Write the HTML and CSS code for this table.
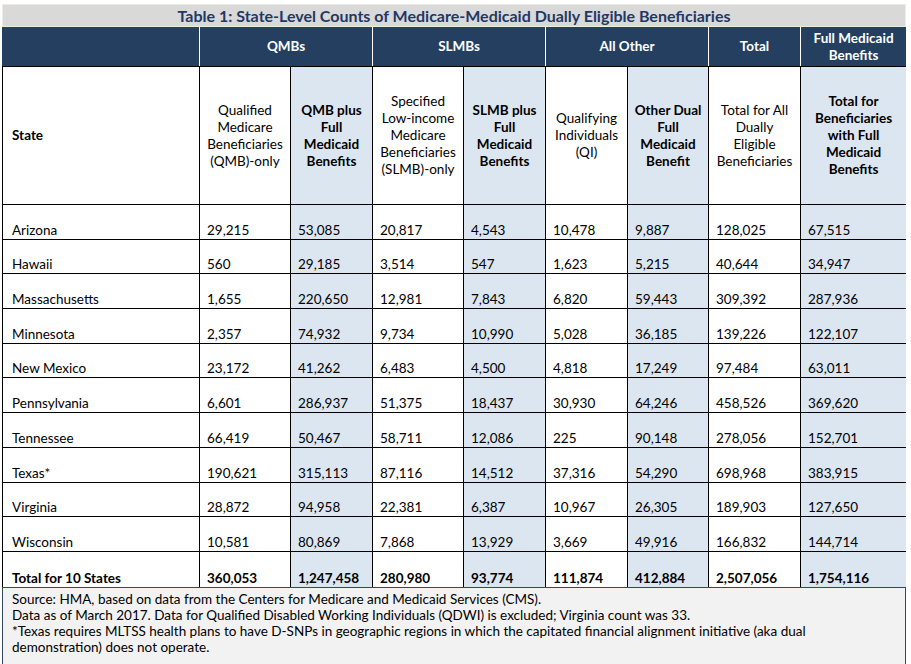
FILE: index.html
```html
<!DOCTYPE html>
<html lang="en">
<head>
<meta charset="utf-8">
<title>Table 1</title>
<link rel="stylesheet" href="styles.css">
</head>
<body>
<div class="wrap">
  <div class="title">Table 1: State-Level Counts of Medicare-Medicaid Dually Eligible Beneficiaries</div>
  <table class="data">
    <colgroup>
      <col class="c-state"><col class="c1"><col class="c2"><col class="c3"><col class="c4"><col class="c5"><col class="c6"><col class="c7"><col class="c8">
    </colgroup>
    <thead>
      <tr class="group">
        <th></th>
        <th colspan="2">QMBs</th>
        <th colspan="2">SLMBs</th>
        <th colspan="2">All Other</th>
        <th>Total</th>
        <th class="last">Full Medicaid<br>Benefits</th>
      </tr>
      <tr class="sub">
        <th class="state">State</th>
        <th>Qualified<br>Medicare<br>Beneficiaries<br>(QMB)-only</th>
        <th class="shade strong">QMB plus<br>Full<br>Medicaid<br>Benefits</th>
        <th>Specified<br>Low-income<br>Medicare<br>Beneficiaries<br>(SLMB)-only</th>
        <th class="shade strong">SLMB plus<br>Full<br>Medicaid<br>Benefits</th>
        <th>Qualifying<br>Individuals<br>(QI)</th>
        <th class="shade strong">Other Dual<br>Full<br>Medicaid<br>Benefit</th>
        <th>Total for All<br>Dually<br>Eligible<br>Beneficiaries</th>
        <th class="shade strong last">Total for<br>Beneficiaries<br>with Full<br>Medicaid<br>Benefits</th>
      </tr>
    </thead>
    <tbody>
      <tr><td class="state">Arizona</td><td>29,215</td><td class="shade">53,085</td><td>20,817</td><td class="shade">4,543</td><td>10,478</td><td class="shade">9,887</td><td>128,025</td><td class="shade last">67,515</td></tr>
      <tr><td class="state">Hawaii</td><td>560</td><td class="shade">29,185</td><td>3,514</td><td class="shade">547</td><td>1,623</td><td class="shade">5,215</td><td>40,644</td><td class="shade last">34,947</td></tr>
      <tr><td class="state">Massachusetts</td><td>1,655</td><td class="shade">220,650</td><td>12,981</td><td class="shade">7,843</td><td>6,820</td><td class="shade">59,443</td><td>309,392</td><td class="shade last">287,936</td></tr>
      <tr><td class="state">Minnesota</td><td>2,357</td><td class="shade">74,932</td><td>9,734</td><td class="shade">10,990</td><td>5,028</td><td class="shade">36,185</td><td>139,226</td><td class="shade last">122,107</td></tr>
      <tr><td class="state">New Mexico</td><td>23,172</td><td class="shade">41,262</td><td>6,483</td><td class="shade">4,500</td><td>4,818</td><td class="shade">17,249</td><td>97,484</td><td class="shade last">63,011</td></tr>
      <tr><td class="state">Pennsylvania</td><td>6,601</td><td class="shade">286,937</td><td>51,375</td><td class="shade">18,437</td><td>30,930</td><td class="shade">64,246</td><td>458,526</td><td class="shade last">369,620</td></tr>
      <tr><td class="state">Tennessee</td><td>66,419</td><td class="shade">50,467</td><td>58,711</td><td class="shade">12,086</td><td>225</td><td class="shade">90,148</td><td>278,056</td><td class="shade last">152,701</td></tr>
      <tr><td class="state">Texas*</td><td>190,621</td><td class="shade">315,113</td><td>87,116</td><td class="shade">14,512</td><td>37,316</td><td class="shade">54,290</td><td>698,968</td><td class="shade last">383,915</td></tr>
      <tr><td class="state">Virginia</td><td>28,872</td><td class="shade">94,958</td><td>22,381</td><td class="shade">6,387</td><td>10,967</td><td class="shade">26,305</td><td>189,903</td><td class="shade last">127,650</td></tr>
      <tr><td class="state">Wisconsin</td><td>10,581</td><td class="shade">80,869</td><td>7,868</td><td class="shade">13,929</td><td>3,669</td><td class="shade">49,916</td><td>166,832</td><td class="shade last">144,714</td></tr>
      <tr class="total"><td class="state">Total for 10 States</td><td>360,053</td><td class="shade">1,247,458</td><td>280,980</td><td class="shade">93,774</td><td>111,874</td><td class="shade">412,884</td><td>2,507,056</td><td class="shade last">1,754,116</td></tr>
    </tbody>
  </table>
  <div class="notes">
    <p>Source: HMA, based on data from the Centers for Medicare and Medicaid Services (CMS).</p>
    <p>Data as of March 2017. Data for Qualified Disabled Working Individuals (QDWI) is excluded; Virginia count was 33.</p>
    <p>*Texas requires MLTSS health plans to have D-SNPs in geographic regions in which the capitated financial alignment initiative (aka dual demonstration) does not operate.</p>
  </div>
</div>
</body>
</html>
```
FILE: styles.css
```css
html, body {
  margin: 0;
  padding: 0;
  background: #ffffff;
}
body {
  font-family: Lato, "Liberation Sans", sans-serif;
  font-size: 13.5px;
  color: #000;
}
.wrap {
  width: 904px;
  margin: 4px 0 0 2px;
}
.title {
  box-sizing: border-box;
  height: 23px;
  border: 1px solid #eeece1;
  background: #d9d9d9;
  color: #1f3864;
  font-weight: bold;
  font-size: 16px;
  line-height: 21px;
  text-align: center;
}
.data {
  width: 904px;
  table-layout: fixed;
  border-collapse: separate;
  border-spacing: 0;
}
.c-state { width: 198px; }
.c1 { width: 91px; }
.c2 { width: 82px; }
.c3 { width: 91px; }
.c4 { width: 82px; }
.c5 { width: 82px; }
.c6 { width: 81px; }
.c7 { width: 92px; }
.c8 { width: 105px; }

.data th, .data td {
  padding: 0;
}
.group th {
  height: 39px;
  background: #243f60;
  color: #fff;
  font-weight: bold;
  line-height: 17px;
  text-align: center;
  vertical-align: middle;
  border-right: 1px solid #fff;
}
.group th.last { border-right: 0; }

.sub th {
  height: 139px;
  box-sizing: border-box;
  border-top: 1px solid #000;
  border-bottom: 1px solid #000;
  border-right: 1px solid #000;
  font-weight: normal;
  line-height: 17px;
  text-align: center;
  vertical-align: middle;
  padding: 0 3px;
}
.sub th.strong { font-weight: bold; }
.sub th.state {
  text-align: left;
  font-weight: bold;
  border-left: 1px solid #000;
  padding-left: 9px;
}
.sub th.last { border-right: 0; }

.data tbody tr { height: 34.7px; }
.data tbody tr.total { height: 35px; }
.data td {
  border-right: 1px solid #000;
  border-bottom: 1px solid #000;
  vertical-align: bottom;
  text-align: left;
  padding: 0 0 0 7px;
  line-height: 17px;
  white-space: nowrap;
}
.data td.state {
  border-left: 1px solid #000;
  padding-left: 9px;
}
.data td.last { border-right: 0; }
.data tr.total td {
  border-bottom: 0;
  font-weight: bold;
}
.shade { background: #dce6f1; }

.notes {
  border: 1px solid #34495f;
  background: #f2f2f2;
  padding: 3px 10px 8px 9px;
  line-height: 16px;
  height: 66px;
}
.notes p {
  margin: 0;
}
```
